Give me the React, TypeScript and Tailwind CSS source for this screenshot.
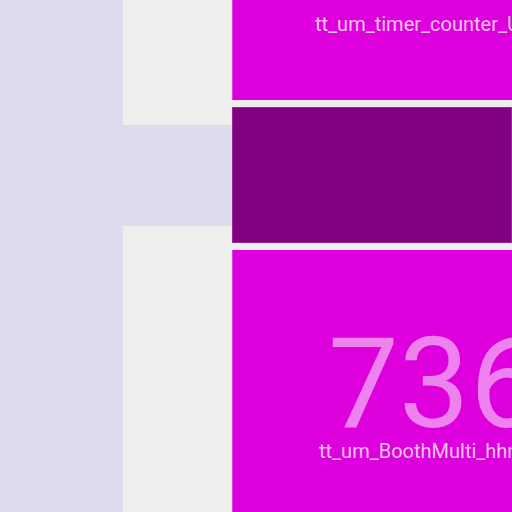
export default function App() {
    return (
        <div className="flex h-[512px] w-[512px] overflow-hidden bg-[#eeeeee]" style={{ fontFamily: 'Roboto, "Liberation Sans", sans-serif' }}>
            <div className="w-[123px] shrink-0 bg-[#dcdcec]" />

            <div className="w-[109px] shrink-0 pt-[125px]">
                <div className="h-[101px] bg-[#dcdcec]" />
            </div>

            <div className="flex w-[280px] shrink-0 flex-col gap-[7px]">
                <div className="h-[100px] border-l border-[#e040e0] bg-[#dd00dd] pl-[82px] pt-[13px]">
                    <p className="whitespace-nowrap text-[20px] leading-[23px] text-[#f8c4f8]">tt_um_timer_counter_UART</p>
                </div>

                <div className="h-[136px] border border-[#9a2a9a] bg-[#800080]" />

                <div className="flex-1 border-l border-[#e040e0] bg-[#dd00dd] pt-[71px]">
                    <p className="ml-[95px] whitespace-nowrap text-[126px] leading-[126px] text-[#ee82ee]">736</p>
                    <p className="ml-[86px] mt-[-7px] whitespace-nowrap text-[20px] leading-[23px] text-[#f8c4f8]">tt_um_BoothMulti_hhm</p>
                </div>
            </div>
        </div>
    )
}
